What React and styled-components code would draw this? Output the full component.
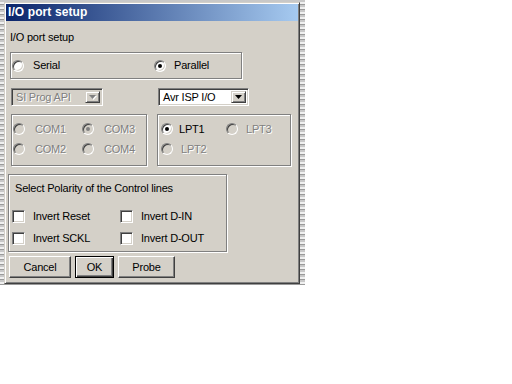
import React from 'react';
import styled, { createGlobalStyle, css } from 'styled-components';

const COLORS = {
  face: '#d4d0c8',
  shadow: '#808080',
  dark: '#404040',
  light: '#ffffff',
  text: '#000000',
};

const GlobalStyle = createGlobalStyle`
  html, body {
    margin: 0;
    background: #ffffff;
  }
  body {
    font-family: "Liberation Sans", Arial, sans-serif;
    font-size: 11px;
    letter-spacing: -0.2px;
    color: ${COLORS.text};
  }
`;

const Desktop = styled.div`
  width: 305px;
  height: 285px;
  box-sizing: border-box;
  padding: 2px 0 0 4px;
  background: repeating-linear-gradient(180deg, #c8c8c8 0 2px, #f0f0f0 2px 4px, #9a9a9a 4px 5px);
`;

const Window = styled.div`
  width: 296px;
  height: 282px;
  box-sizing: border-box;
  padding: 1px;
  background: ${COLORS.face};
  border: 1px solid;
  border-color: ${COLORS.face} ${COLORS.dark} ${COLORS.dark} ${COLORS.face};
  box-shadow: inset 1px 1px 0 ${COLORS.light}, inset -1px -1px 0 ${COLORS.shadow};
  display: flex;
  flex-direction: column;
`;

const TitleBar = styled.div`
  height: 17px;
  padding-left: 2px;
  background: linear-gradient(90deg, #0a246a, #a6caf0);
  color: #ffffff;
  font-size: 12px;
  font-weight: 700;
  letter-spacing: 0.1px;
  line-height: 17px;
`;

const Body = styled.div`
  display: flex;
  flex-direction: column;
  align-items: flex-start;
  padding-left: 2px;
`;

const Heading = styled.div`
  margin: 10px 0 0 2px;
  line-height: 13px;
`;

const GroupBox = styled.div`
  box-sizing: border-box;
  border: 1px solid ${COLORS.shadow};
  box-shadow: inset 1px 1px 0 ${COLORS.light}, 1px 1px 0 ${COLORS.light};
`;

const ModeGroup = styled(GroupBox)`
  margin: 8px 0 0 2px;
  width: 232px;
  height: 27px;
  padding-left: 1px;
  display: flex;
  align-items: center;
`;

const Panels = styled.div`
  margin: 9px 0 0 3px;
  display: grid;
  grid-template-columns: 136px 134px;
  grid-template-rows: 18px 52px;
  column-gap: 10px;
  row-gap: 8px;
`;

const PortGroup = styled(GroupBox)`
  display: grid;
  grid-template-columns: ${({ $col }) => $col}px auto;
  grid-auto-rows: 20px;
  align-items: center;
  padding: 4px 0 0 ${({ $pad }) => $pad}px;
`;

const Option = styled.label`
  display: flex;
  align-items: center;
  gap: ${({ $gap }) => $gap ?? 9}px;
  width: ${({ $width }) => ($width ? `${$width}px` : 'auto')};
  line-height: 13px;
  color: ${({ $disabled }) => ($disabled ? COLORS.shadow : COLORS.text)};
  text-shadow: ${({ $disabled }) => ($disabled ? `1px 1px 0 ${COLORS.light}` : 'none')};
`;

const RadioCircle = styled.span`
  flex: none;
  width: 12px;
  height: 12px;
  box-sizing: border-box;
  border-radius: 50%;
  border: 1px solid;
  border-color: ${COLORS.shadow} ${COLORS.light} ${COLORS.light} ${COLORS.shadow};
  background: ${({ $disabled }) => ($disabled ? COLORS.face : '#ffffff')};
  box-shadow: inset 1px 1px 0 ${COLORS.dark}, inset -1px -1px 0 ${COLORS.face};
  display: flex;
  align-items: center;
  justify-content: center;

  &::after {
    content: '';
    width: 4px;
    height: 4px;
    border-radius: 50%;
    background: ${({ $checked, $disabled }) =>
      $checked ? ($disabled ? COLORS.shadow : COLORS.text) : 'transparent'};
  }
`;

const CheckBox = styled.span`
  flex: none;
  width: 13px;
  height: 13px;
  box-sizing: border-box;
  border: 1px solid;
  border-color: ${COLORS.shadow} ${COLORS.light} ${COLORS.light} ${COLORS.shadow};
  box-shadow: inset 1px 1px 0 ${COLORS.dark}, inset -1px -1px 0 ${COLORS.face};
  background: #ffffff;
`;

const Combo = styled.div`
  width: ${({ $width }) => $width}px;
  margin-left: ${({ $offset }) => $offset ?? 0}px;
  height: 18px;
  box-sizing: border-box;
  padding: 2px;
  border: 1px solid;
  border-color: ${COLORS.shadow} ${COLORS.light} ${COLORS.light} ${COLORS.shadow};
  box-shadow: inset 1px 1px 0 ${COLORS.dark}, inset -1px -1px 0 ${COLORS.face};
  background: ${({ $disabled }) => ($disabled ? COLORS.face : '#ffffff')};
  display: flex;
  align-items: stretch;
`;

const ComboText = styled.span`
  flex: 1;
  padding-left: 2px;
  display: flex;
  align-items: center;
  color: ${({ $disabled }) => ($disabled ? COLORS.shadow : COLORS.text)};
  text-shadow: ${({ $disabled }) => ($disabled ? `1px 1px 0 ${COLORS.light}` : 'none')};
`;

const ComboButton = styled.span`
  width: 15px;
  box-sizing: border-box;
  background: ${COLORS.face};
  border: 1px solid;
  border-color: ${COLORS.face} ${COLORS.dark} ${COLORS.dark} ${COLORS.face};
  box-shadow: inset 1px 1px 0 ${COLORS.light}, inset -1px -1px 0 ${COLORS.shadow};
  display: flex;
  align-items: center;
  justify-content: center;
`;

const PolarityGroup = styled(GroupBox)`
  margin-top: 8px;
  width: 219px;
  height: 78px;
  display: flex;
  flex-direction: column;
`;

const Caption = styled.div`
  margin: 7px 0 0 6px;
  line-height: 13px;
`;

const CheckGrid = styled.div`
  margin: 10px 0 0 3px;
  display: grid;
  grid-template-columns: 108px auto;
  grid-auto-rows: 22px;
  align-items: center;
`;

const ButtonRow = styled.div`
  margin: 4px 0 0 1px;
  display: flex;
  gap: 4px;
`;

const Button = styled.button`
  width: ${({ $width }) => $width}px;
  height: 22px;
  box-sizing: border-box;
  padding: 0;
  font: inherit;
  letter-spacing: inherit;
  color: ${COLORS.text};
  background: ${COLORS.face};
  border: 1px solid;
  border-color: ${COLORS.light} ${COLORS.dark} ${COLORS.dark} ${COLORS.light};
  box-shadow: inset -1px -1px 0 ${COLORS.shadow};

  ${({ $default }) =>
    $default &&
    css`
      border-color: ${COLORS.text};
      box-shadow: inset 1px 1px 0 ${COLORS.light}, inset -1px -1px 0 ${COLORS.dark},
        inset -2px -2px 0 ${COLORS.shadow};
    `}
`;

const Arrow = ({ disabled }) => (
  <svg width='8' height='5' viewBox='0 0 8 5'>
    {disabled && <polygon points='1,1 8,1 4.5,5' fill={COLORS.light} />}
    <polygon points='0,0 7,0 3.5,4' fill={disabled ? COLORS.shadow : COLORS.text} />
  </svg>
);

const Radio = ({ label, checked, disabled, width, gap }) => (
  <Option $disabled={disabled} $width={width} $gap={gap}>
    <RadioCircle $checked={checked} $disabled={disabled} />
    {label}
  </Option>
);

const Check = ({ label }) => (
  <Option $gap={8}>
    <CheckBox />
    {label}
  </Option>
);

const Select = ({ value, width, offset, disabled }) => (
  <Combo $width={width} $offset={offset} $disabled={disabled}>
    <ComboText $disabled={disabled}>{value}</ComboText>
    <ComboButton>
      <Arrow disabled={disabled} />
    </ComboButton>
  </Combo>
);

const App = () => (
  <>
    <GlobalStyle />
    <Desktop>
      <Window>
        <TitleBar>I/O port setup</TitleBar>
        <Body>
          <Heading>I/O port setup</Heading>
          <ModeGroup>
            <Radio label='Serial' width={142} />
            <Radio label='Parallel' checked gap={8} />
          </ModeGroup>
          <Panels>
            <Select value='SI Prog API' width={92} disabled />
            <Select value='Avr ISP I/O' width={91} offset={1} />
            <PortGroup $col={69} $pad={1}>
              <Radio label='COM1' disabled gap={10} />
              <Radio label='COM3' checked disabled gap={10} />
              <Radio label='COM2' disabled gap={10} />
              <Radio label='COM4' disabled gap={10} />
            </PortGroup>
            <PortGroup $col={65} $pad={3}>
              <Radio label='LPT1' checked gap={6} />
              <Radio label='LPT3' disabled gap={8} />
              <Radio label='LPT2' disabled gap={8} />
            </PortGroup>
          </Panels>
          <PolarityGroup>
            <Caption>Select Polarity of the Control lines</Caption>
            <CheckGrid>
              <Check label='Invert Reset' />
              <Check label='Invert D-IN' />
              <Check label='Invert SCKL' />
              <Check label='Invert D-OUT' />
            </CheckGrid>
          </PolarityGroup>
          <ButtonRow>
            <Button $width={62}>Cancel</Button>
            <Button $width={39} $default>
              OK
            </Button>
            <Button $width={57}>Probe</Button>
          </ButtonRow>
        </Body>
      </Window>
    </Desktop>
  </>
);

export default App;
